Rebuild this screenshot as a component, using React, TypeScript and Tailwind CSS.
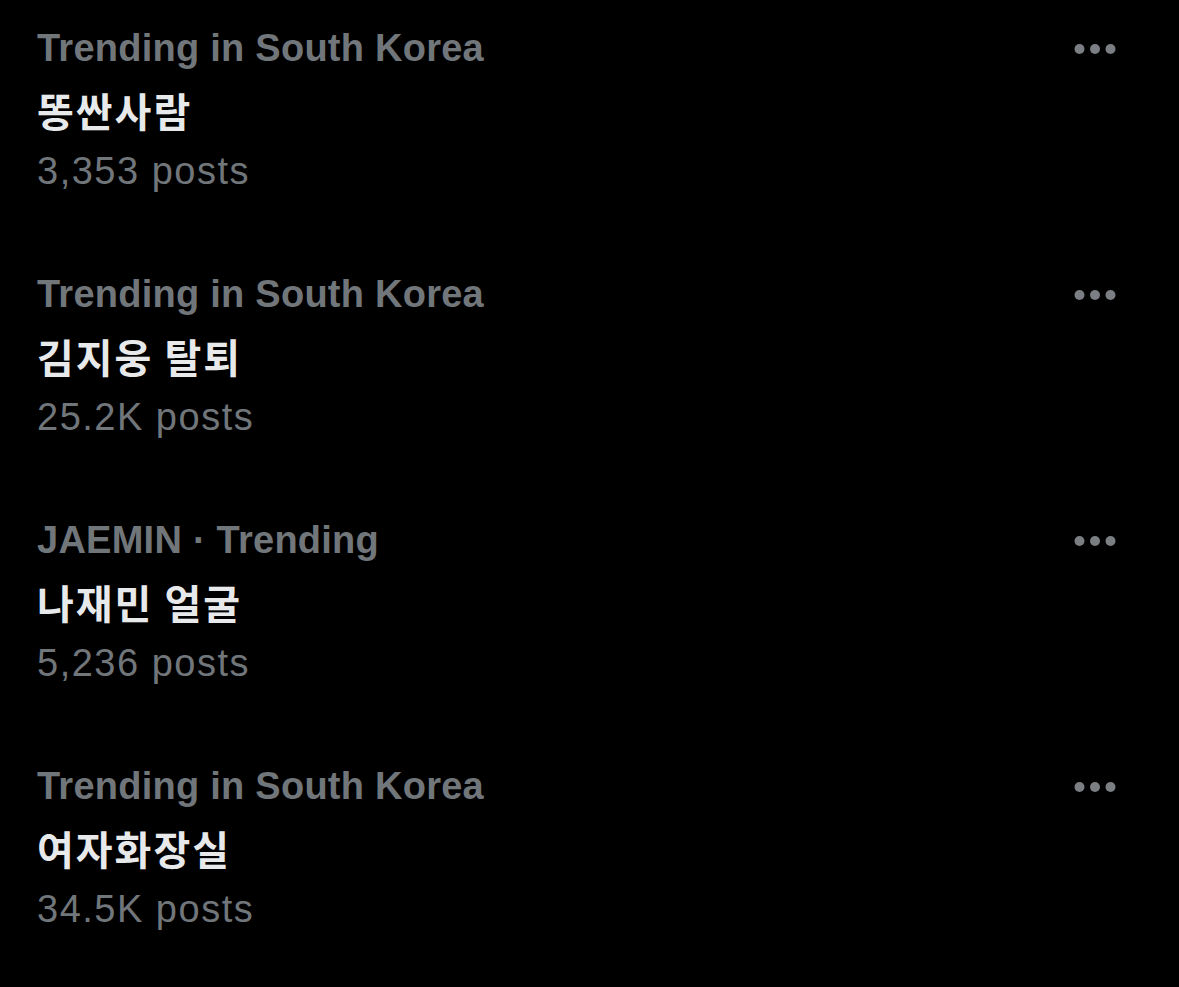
import React from "react";

const items = [
  { cat: "Trending in South Korea", title: "똥싼사람", posts: "3,353 posts" },
  { cat: "Trending in South Korea", title: "김지웅 탈퇴", posts: "25.2K posts" },
  { cat: "JAEMIN · Trending", title: "나재민 얼굴", posts: "5,236 posts" },
  { cat: "Trending in South Korea", title: "여자화장실", posts: "34.5K posts" },
];

function Dots() {
  return (
    <svg width="42" height="12" viewBox="0 0 42 12" className="shrink-0">
      <circle cx="5.5" cy="6" r="5" fill="#7b7e82" />
      <circle cx="21" cy="6" r="5" fill="#7b7e82" />
      <circle cx="36.5" cy="6" r="5" fill="#7b7e82" />
    </svg>
  );
}

export default function App() {
  return (
    <div
      className="w-[1179px] h-[987px] bg-black overflow-hidden"
      style={{ fontFamily: '"Liberation Sans", "Noto Sans CJK KR", sans-serif' }}
    >
      {items.map((it, i) => (
        <div key={i} className="flex flex-col pl-[37px] pr-[63px] pt-[18px] pb-[43.5px]">
          <div className="flex items-center justify-between h-[61.5px]">
            <span className="text-[38px] leading-[61.5px] font-bold text-[#71767b] tracking-[0.25px]">{it.cat}</span>
            <Dots />
          </div>
          <div
            className="text-[40px] leading-[61.5px] h-[61.5px] font-bold text-[#e7e9ea] tracking-[2px]"
            style={{ fontFamily: '"Noto Sans CJK KR", sans-serif' }}
          >
            {it.title}
          </div>
          <div className="text-[38px] leading-[61.5px] h-[61.5px] text-[#71767b] tracking-[1.5px]">{it.posts}</div>
        </div>
      ))}
    </div>
  );
}
